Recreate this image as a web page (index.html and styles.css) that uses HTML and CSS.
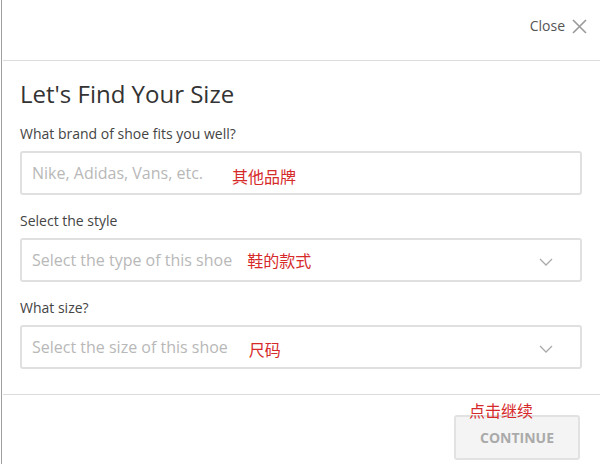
FILE: index.html
```html
<!DOCTYPE html>
<html lang="en">
<head>
    <meta charset="UTF-8">
    <meta name="viewport" content="width=device-width, initial-scale=1.0">
    <title>Let's Find Your Size</title>
    <link rel="stylesheet" href="styles.css">
</head>
<body>
    <div class="modal">
        <div class="modal-header">
            <span class="close">Close
                <svg class="close-icon" width="15" height="15" viewBox="0 0 15 15">
                    <path d="M1 1 L14 14 M14 1 L1 14" stroke="#999" stroke-width="1.6" fill="none"/>
                </svg>
            </span>
        </div>

        <div class="modal-body">
            <h1>Let's Find Your Size</h1>

            <label>What brand of shoe fits you well?</label>
            <div class="field">
                <span class="placeholder">Nike, Adidas, Vans, etc.</span>
                <span class="note note-brand">其他品牌</span>
            </div>

            <label>Select the style</label>
            <div class="field">
                <span class="placeholder">Select the type of this shoe</span>
                <span class="note note-style">鞋的款式</span>
                <svg class="chevron" width="14" height="8" viewBox="0 0 14 8">
                    <path d="M1 1 L7 7 L13 1" stroke="#aaa" stroke-width="1.3" fill="none"/>
                </svg>
            </div>

            <label>What size?</label>
            <div class="field">
                <span class="placeholder">Select the size of this shoe</span>
                <span class="note note-size">尺码</span>
                <svg class="chevron" width="14" height="8" viewBox="0 0 14 8">
                    <path d="M1 1 L7 7 L13 1" stroke="#aaa" stroke-width="1.3" fill="none"/>
                </svg>
            </div>
        </div>

        <div class="modal-footer">
            <span class="note note-continue">点击继续</span>
            <button type="button">CONTINUE</button>
        </div>
    </div>
</body>
</html>
```

FILE: styles.css
```css
body {
    margin: 0;
    font-family: "Open Sans", "Noto Sans CJK SC", sans-serif;
    background-color: #fff;
}

.modal {
    width: 597px;
    height: 464px;
    margin-left: 1px;
    border-left: 1px solid #a0a0a0;
    padding-left: 1px;
    overflow: hidden;
}

.modal-header {
    height: 61px;
    border-bottom: 1px solid #dcdcdc;
    display: flex;
    justify-content: flex-end;
    align-items: flex-start;
    padding-right: 13px;
    box-sizing: border-box;
}

.close {
    display: flex;
    align-items: center;
    gap: 7px;
    margin-top: 17px;
    font-size: 14px;
    color: #555;
    line-height: 18px;
}

.close-icon {
    display: block;
}

.modal-body {
    padding: 16px 18px 25px 17px;
    border-bottom: 1px solid #dcdcdc;
}

h1 {
    margin: 0 0 14px 0;
    font-size: 24px;
    font-weight: 400;
    color: #333;
    line-height: 33px;
}

label {
    display: block;
    font-size: 14px;
    color: #444;
    line-height: 19px;
    margin-bottom: 8px;
}

.field {
    height: 44px;
    box-sizing: border-box;
    border: 2px solid #e0e0e0;
    border-radius: 3px;
    display: flex;
    align-items: center;
    padding: 0 27px 0 10px;
    margin-bottom: 16px;
}

.field:last-child {
    margin-bottom: 0;
}

.placeholder {
    font-size: 16px;
    color: #b8b8b8;
}

.note {
    font-family: "Noto Sans CJK SC", sans-serif;
    font-size: 16px;
    color: #d62a2a;
    line-height: 18px;
}

.note-brand {
    margin-left: 29px;
    margin-top: 5px;
}

.note-style {
    margin-left: 15px;
}

.note-size {
    margin-left: 21px;
    margin-top: 4px;
}

.chevron {
    margin-left: auto;
    margin-top: 4px;
}

.modal-footer {
    position: relative;
    display: flex;
    justify-content: flex-end;
    padding: 20px 20px 0 0;
}

.note-continue {
    position: absolute;
    left: 466px;
    top: 6px;
}

button {
    width: 126px;
    height: 45px;
    background-color: #f4f4f4;
    border: 2px solid #e2e2e2;
    border-radius: 3px;
    font-family: "Open Sans", sans-serif;
    font-size: 14px;
    font-weight: 700;
    color: #aaa;
}
```
